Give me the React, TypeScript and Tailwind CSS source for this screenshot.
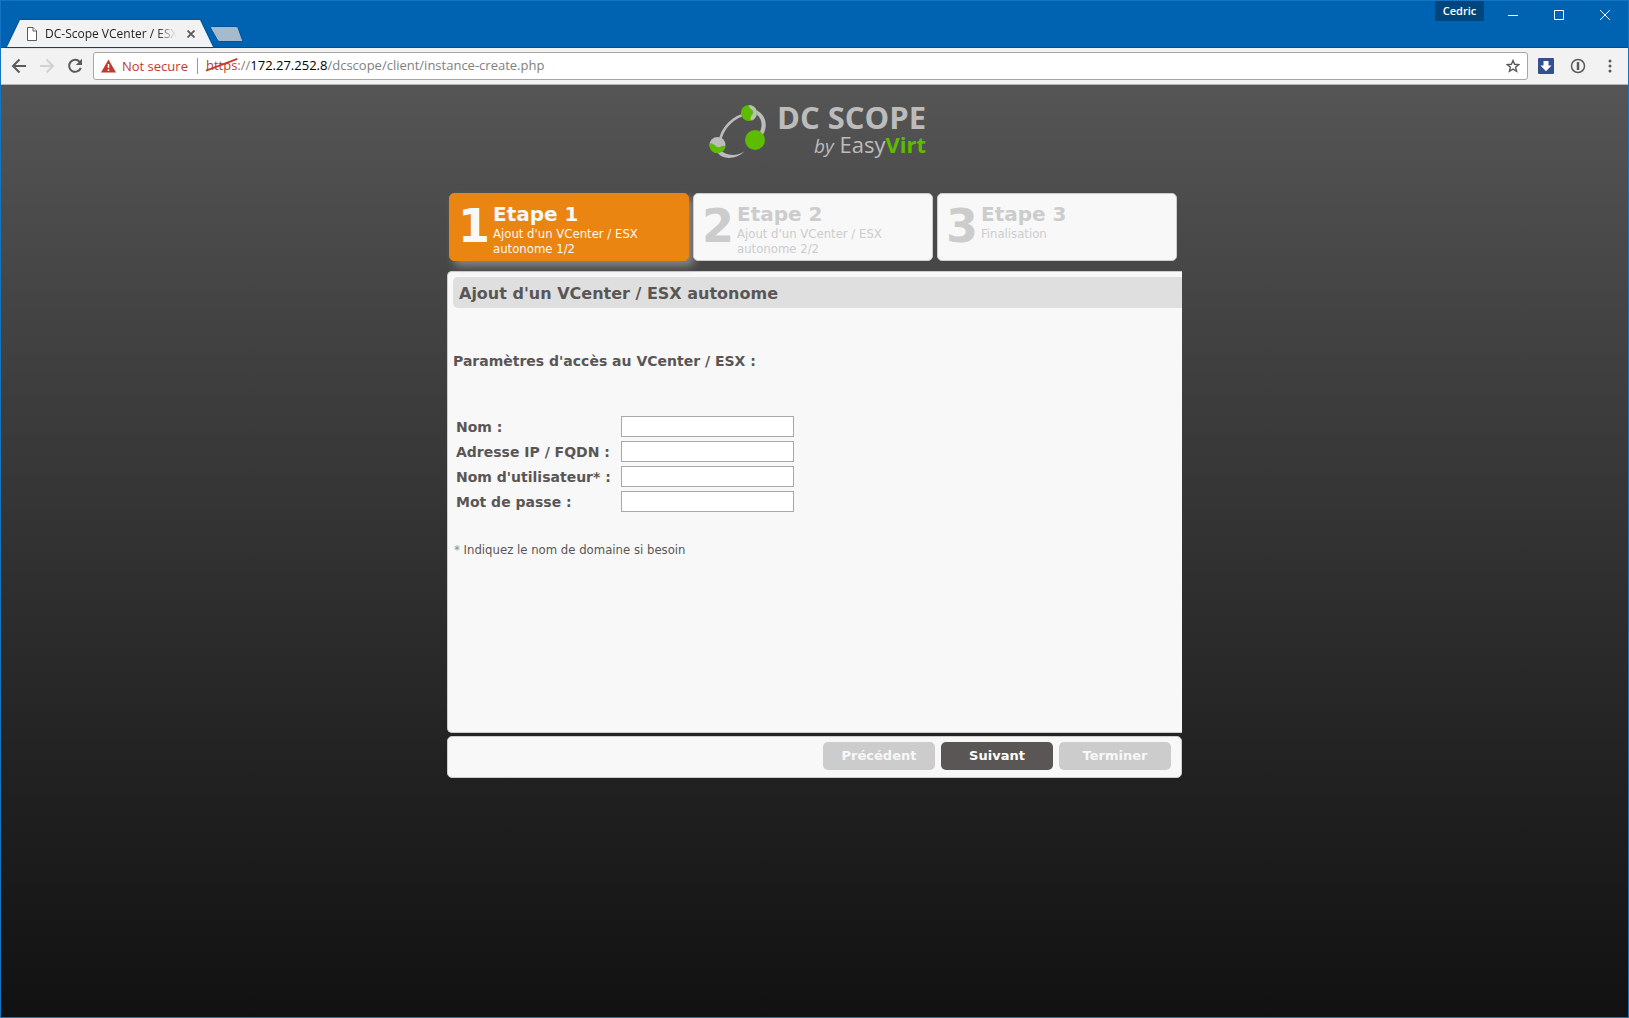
import React from 'react';

const steps = [
  { number: 1, title: 'Etape 1', text: "Ajout d'un VCenter / ESX autonome 1/2" },
  { number: 2, title: 'Etape 2', text: "Ajout d'un VCenter / ESX autonome 2/2" },
  { number: 3, title: 'Etape 3', text: 'Finalisation' },
];

const fields = [
  { id: 'name', label: 'Nom :', type: 'text' },
  { id: 'address', label: 'Adresse IP / FQDN :', type: 'text' },
  { id: 'user', label: "Nom d'utilisateur* :", type: 'text' },
  { id: 'password', label: 'Mot de passe :', type: 'password' },
];

const windowButton = 'flex h-7 w-[46px] items-center justify-center text-white';

function TitleBar() {
  return (
    <header className="flex h-[46px] items-end bg-[#0063b1]">
      {/* Tabs */}
      <div className="flex h-[27px] min-w-0 flex-1 pl-1.5">
        <div className="drop-shadow-[0_0_1px_#003a70]">
          <div className="flex h-[27px] w-[206px] items-center bg-[#f2f2f2] pl-5 pr-[18px] [clip-path:polygon(0_100%,13px_0,calc(100%-13px)_0,100%_100%)]">
            <svg className="h-3.5 w-[10px] shrink-0" viewBox="0 0 10 14" fill="#fff" stroke="#5a5a5a" aria-hidden="true">
              <path d="M.5.5h5.5l3.5 3.5v9.5h-9z" />
              <path d="M6 .5v3.500h3.500" />
            </svg>
            <span className="ml-2 h-5 w-[132px] overflow-hidden whitespace-nowrap text-xs leading-5 text-[#222] [mask-image:linear-gradient(to_right,#000_112px,transparent_131px)]">
              DC-Scope VCenter / ESX
            </span>
            <button aria-label="Close tab" className="ml-2.5 shrink-0">
              <svg className="h-2 w-2" viewBox="0 0 8 8" stroke="#5a5a5a" strokeWidth="1.800" aria-hidden="true">
                <path d="M.5.5l7 7M7.500.5l-7 7" />
              </svg>
            </button>
          </div>
        </div>
        <button aria-label="New tab" className="-ml-1 mt-1.5 h-4 w-[34px]">
          <svg className="h-4 w-[34px]" viewBox="0 0 34 16" aria-hidden="true">
            <path d="M2.500 .5h24.500q1.500 0 2 1.200l4.500 12.500q.5 1.300-1 1.300h-21.500q-2 0-2.600-1.500l-6.800-12q-.6-1.500.9-1.500z" fill="#a5bacd" stroke="#00549c" />
          </svg>
        </button>
      </div>

      <div className="flex h-full items-start">
        <button className="mr-1.5 h-5 w-[49px] bg-[#00467d] text-[11px] font-semibold leading-5 text-white">Cedric</button>
        <button aria-label="Minimize" className={windowButton}>
          <svg className="h-2.5 w-2.5" viewBox="0 0 10 10" stroke="currentColor" aria-hidden="true">
            <path d="M0 5.500h10" />
          </svg>
        </button>
        <button aria-label="Maximize" className={windowButton}>
          <svg className="h-2.5 w-2.5" viewBox="0 0 10 10" fill="none" stroke="currentColor" aria-hidden="true">
            <path d="M.5.5h9v9h-9z" />
          </svg>
        </button>
        <button aria-label="Close" className={windowButton}>
          <svg className="h-2.5 w-2.5" viewBox="0 0 10 10" stroke="currentColor" aria-hidden="true">
            <path d="M0 0l10 10M10 0L0 10" />
          </svg>
        </button>
      </div>
    </header>
  );
}

function Toolbar() {
  return (
    <div className="flex h-[38px] items-center border-b border-t border-b-[#b6b4b6] border-t-[#0b4a85] bg-[#f2f2f2]">
      <div className="flex items-center gap-3 pl-2.5 pr-2.5">
        <button aria-label="Back">
          <svg className="h-4 w-4" viewBox="0 0 16 16" fill="none" stroke="#5a5a5a" strokeWidth="2" aria-hidden="true">
            <path d="M15 8H2.500M8.500 1.500L2 8l6.500 6.500" />
          </svg>
        </button>
        <button aria-label="Forward">
          <svg className="h-4 w-4" viewBox="0 0 16 16" fill="none" stroke="#d2d2d2" strokeWidth="2" aria-hidden="true">
            <path d="M1 8h12.500M7.500 1.500L14 8l-6.500 6.500" />
          </svg>
        </button>
        <button aria-label="Reload">
          <svg className="h-4 w-4" viewBox="0 0 16 16" fill="none" stroke="#5a5a5a" strokeWidth="2" aria-hidden="true">
            <path d="M12.700 3.900A6 6 0 1 0 13.800 9.800" />
            <path d="M15 .8v6.200H8.800z" fill="#5a5a5a" stroke="none" />
          </svg>
        </button>
      </div>

      <div className="flex h-7 min-w-0 flex-1 items-center rounded-[3px] border border-[#a6a6a6] bg-white pl-[7px] pr-[7px] text-[13px]">
        <svg className="h-3.5 w-[15px]" viewBox="0 0 15 14" aria-hidden="true">
          <path d="M7.500.5L15 13.500H0z" fill="#c53929" />
          <path d="M7.500 5v4M7.500 10.300v1.700" stroke="#fff" strokeWidth="1.500" />
        </svg>
        <span className="ml-1.5 border-r border-[#999] pr-[9px] leading-4 text-[#c53929]">Not secure</span>
        <p className="ml-2 flex-1 whitespace-nowrap text-[#808080]">
          <span className="relative text-[#c53929]">
            https
            <svg className="absolute left-0 top-0 h-full w-full overflow-visible" viewBox="0 0 32 16" preserveAspectRatio="none" stroke="#c53929" strokeWidth="1.600" aria-hidden="true">
              <path d="M0 13L32 2.500" />
            </svg>
          </span>
          ://<span className="text-black">172.27.252.8</span>/dcscope/client/instance-create.php
        </p>
        <button aria-label="Bookmark">
          <svg className="h-3.5 w-3.5" viewBox="0 0 14 14" fill="none" stroke="#5a5a5a" strokeWidth="1.400" aria-hidden="true">
            <path d="M7 1.500l1.600 3.800 4.100.3-3.100 2.700 1 4L7 10.100l-3.600 2.200 1-4L1.300 5.600l4.100-.3z" />
          </svg>
        </button>
      </div>

      <div className="flex items-center gap-4 px-2.5">
        <button aria-label="Download extension">
          <svg className="h-4 w-4" viewBox="0 0 16 16" aria-hidden="true">
            <rect width="16" height="16" rx="1" fill="#35508f" />
            <path d="M5.500 3h5v4.500h3L8 13.200 2.500 7.500h3z" fill="#fff" />
          </svg>
        </button>
        <button aria-label="Password extension">
          <svg className="h-4 w-4" viewBox="0 0 16 16" fill="none" stroke="#5a5a5a" aria-hidden="true">
            <circle cx="8" cy="8" r="6.500" strokeWidth="1.500" />
            <path d="M8 4v8" strokeWidth="2.500" />
          </svg>
        </button>
        <button aria-label="Menu">
          <svg className="h-4 w-4" viewBox="0 0 16 16" fill="#5a5a5a" aria-hidden="true">
            <circle cx="8" cy="3" r="1.500" />
            <circle cx="8" cy="8" r="1.500" />
            <circle cx="8" cy="13" r="1.500" />
          </svg>
        </button>
      </div>
    </div>
  );
}

function Logo() {
  return (
    <div className="flex items-start justify-center gap-2.5 pl-1.5 pt-[17px] font-['Open_Sans',sans-serif]">
      <svg className="mt-0.5 h-[54px] w-[58px]" viewBox="0 0 58 54" aria-hidden="true">
        <path d="M11 37C13 24 24 12 41 9" fill="none" stroke="#bcbcbc" strokeWidth="2.600" />
        <path d="M45 5C56 9 60 20 54 31L51 28C54 20 53 13 45 9z" fill="#bcbcbc" />
        <path d="M10 45C17 52 27 53 36 47C27 56 13 56 8 48z" fill="#bcbcbc" />
        <circle cx="40" cy="9" r="8" fill="#5dbb00" />
        <path d="M40 1A8 8 0 0 1 43 16.400C38 14.500 46 10 44 7C43 5 40 5 40 1z" fill="#bcbcbc" />
        <circle cx="8.500" cy="41" r="8" fill="#bcbcbc" />
        <path d="M.6 40C4 37 7 45 11 43C13 42 16 41 16.300 43A8 8 0 0 1 .6 40z" fill="#5dbb00" />
        <circle cx="46" cy="36" r="10" fill="#5dbb00" />
      </svg>
      <div className="text-right text-[#bcbcbc]">
        <p className="text-[31px] font-bold leading-[30px]">DC SCOPE</p>
        <p className="text-[22px] leading-6">
          <span className="text-[19px] italic">by</span> Easy<span className="font-bold text-[#5dbb00]">Virt</span>
        </p>
      </div>
    </div>
  );
}

function Steps({ current }: { current: number }) {
  return (
    <ol className="mx-0.5 mt-[35px] flex gap-1">
      {steps.map((step) => (
        <li
          key={step.number}
          className={`flex h-[68px] w-60 rounded-[5px] border pl-2 pt-[9px] ${
            step.number === current
              ? 'border-[#ea8511] bg-[#ea8511] text-[#f8f8f8] shadow-[5px_5px_8px_#888]'
              : 'border-[#ccc] bg-[#f8f8f8] text-[#ccc]'
          }`}
        >
          <span className="w-[35px] text-[46px] font-bold leading-[46px]">{step.number}</span>
          <div className="flex-1">
            <h2 className="text-xl font-bold leading-[23px]">{step.title}</h2>
            <p className="w-40 font-['DejaVu_Sans_Condensed','DejaVu_Sans',sans-serif] text-[13px] leading-[15px]">{step.text}</p>
          </div>
        </li>
      ))}
    </ol>
  );
}

export default function App() {
  return (
    <div className="flex min-h-screen flex-col border border-[#1573c4] bg-[#111] font-['Open_Sans','Noto_Sans',sans-serif]">
      <TitleBar />
      <Toolbar />
      <main className="flex-1 bg-linear-to-b from-[#555] to-[#111] font-['DejaVu_Sans',sans-serif] text-[#5a5655]">
        <Logo />
        <div className="mx-auto w-[735px]">
          <Steps current={1} />
          <form onSubmit={(e) => e.preventDefault()}>
            <section className="mt-2.5 min-h-[462px] rounded-l-[5px] border-y border-l border-[#ccc] bg-[#f8f8f8] py-[5px] pl-[5px]">
              <h1 className="rounded-l-[5px] bg-[#dfdfdf] pl-1.5 pt-0.5 text-base font-bold leading-[29px]">
                Ajout d'un VCenter / ESX autonome
              </h1>
              <h2 className="mt-[43px] text-sm font-bold leading-5">Paramètres d'accès au VCenter / ESX :</h2>
              <div className="mt-[45px] flex flex-col gap-1 pl-[3px]">
                {fields.map((field) => (
                  <div key={field.id} className="flex h-[21px] items-center">
                    <label htmlFor={field.id} className="w-[165px] whitespace-nowrap text-sm font-bold">
                      {field.label}
                    </label>
                    <input id={field.id} type={field.type} className="h-[21px] w-[173px] border border-[#a9a9a9] bg-white px-1 text-[13px]" />
                  </div>
                ))}
              </div>
              <p className="mt-7 pl-px font-['DejaVu_Sans_Condensed','DejaVu_Sans',sans-serif] text-[13px] leading-5">
                <span className="text-[#5f9ea0]">*</span> Indiquez le nom de domaine si besoin
              </p>
            </section>
            <div className="mt-[3px] flex h-[42px] justify-end gap-1.5 rounded-[5px] border border-[#ccc] bg-[#f8f8f8] pr-2.5 pt-[5px] text-[13px] font-bold">
              <button type="button" disabled className="h-7 w-28 rounded-[5px] bg-[#ccc] text-[#f8f8f8]">Précédent</button>
              <button type="submit" className="h-7 w-28 rounded-[5px] bg-[#5a5655] text-white">Suivant</button>
              <button type="button" disabled className="h-7 w-28 rounded-[5px] bg-[#ccc] text-[#f8f8f8]">Terminer</button>
            </div>
          </form>
        </div>
      </main>
    </div>
  );
}
